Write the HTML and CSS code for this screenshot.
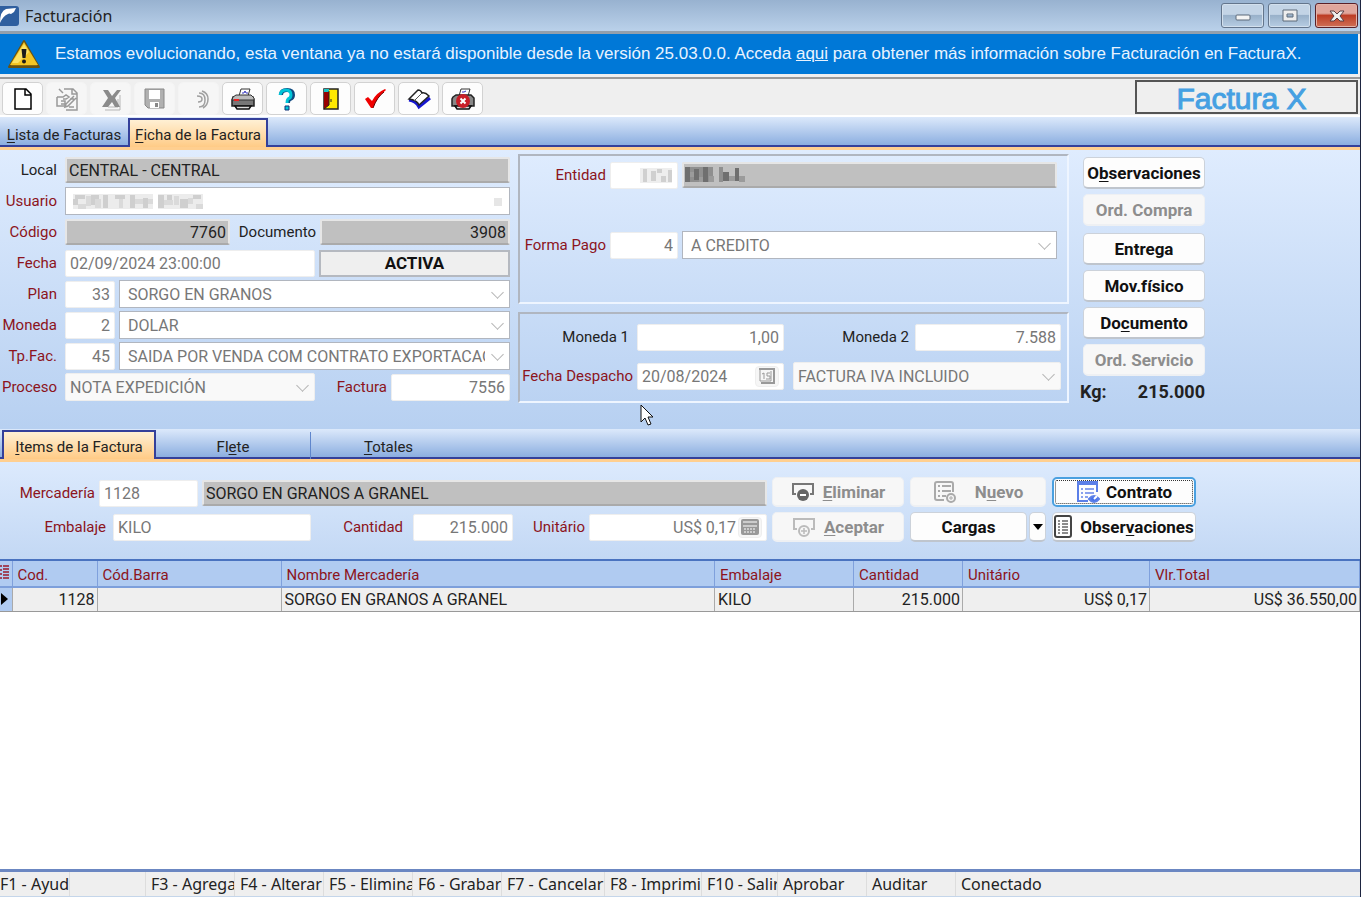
FILE: index.html
```html
<!DOCTYPE html>
<html lang="es">
<head>
    <meta charset="UTF-8">
    <meta name="viewport" content="width=device-width, initial-scale=1.0">
    <title>Facturación</title>
    <link rel="stylesheet" href="styles.css">
</head>
<body>
    <div class="window">
        <header class="titlebar">
            <svg class="app-icon" width="20" height="22" viewBox="0 0 20 22">
                <rect x="-4" y="1" width="23" height="20" rx="3" fill="#2f5f9f"/>
                <path d="M0 18Q0 6 6 4L16 3 14 7 11 9Q9 8 8 9 3 11 0 18Z" fill="#fff"/>
            </svg>
            <h1>Facturación</h1>
            <div class="window-btns">
                <button class="win-btn" aria-label="Minimizar"><svg width="16" height="14" viewBox="0 0 16 14"><rect x="1" y="6" width="14" height="5" rx="1" fill="#f4f4f4" stroke="#5d6a7a"/></svg></button>
                <button class="win-btn" aria-label="Maximizar"><svg width="16" height="14" viewBox="0 0 16 14"><path d="M1 1h14v11H1zM5 5v3h6V5z" fill="#eee" fill-rule="evenodd" stroke="#5d6a7a"/></svg></button>
                <button class="win-btn close" aria-label="Cerrar"><svg width="16" height="14" viewBox="0 0 16 14"><path d="M1 2h4l3 3 3-3h4l-4 5 4 5h-4L8 9l-3 3H1l4-5z" fill="#eee" stroke="#5b3f45"/></svg></button>
            </div>
        </header>

        <div class="banner">
            <svg width="32" height="30" viewBox="0 0 32 30">
                <path d="M16 2 31 28H1Z" fill="#8a6a10" stroke="#6b5310" stroke-width="2" stroke-linejoin="round"/>
                <path d="M16 3 30 26H2Z" fill="#f3c524"/>
                <path d="M16 5 21 13 10 24H4Z" fill="#fbe266"/>
                <path d="M13.5 10h5l-1 9h-3z" fill="#1b1b1b"/>
                <circle cx="16" cy="22.5" r="2" fill="#1b1b1b"/>
            </svg>
            <p>Estamos evolucionando, esta ventana ya no estará disponible desde la versión 25.03.0.0. Acceda <a href="#">aqui</a> para obtener más información sobre Facturación en FacturaX.</p>
        </div>

        <div class="toolbar">
            <button class="tool" aria-label="Nuevo"><svg width="24" height="24" viewBox="0 0 24 24"><path d="M4 2h11l5 5v15H4zM14 2v6h6" fill="#fff" stroke="#000" stroke-width="1.5"/></svg></button>
            <button class="tool" aria-label="Editar" disabled><svg width="24" height="24" viewBox="0 0 24 24" fill="none" stroke="#999" stroke-width="1.5"><path d="M9 2h9l4 4v17H11M17 2v5h5M2 10h6l3-2 3 2-3 2H8M2 10v9h8v-2H6M10 17v-3H6M4 2l4 4M11 17l8-8M11 17l-1 3 3-1 8-8M15 12h4M14 20h5"/></svg></button>
            <button class="tool" aria-label="Borrar" disabled><svg width="24" height="24" viewBox="0 0 24 24"><path d="M21 8v15H6M9 20h10v-8" fill="none" stroke="#b5b5b5"/><path d="M4 3h5l4 6 5-6h4l-6 8 5 9h-5l-3-5-4 5H3l6-9z" fill="#8b8b8b"/></svg></button>
            <button class="tool" aria-label="Grabar" disabled><svg width="24" height="24" viewBox="0 0 24 24"><path d="M2 2h19v19H5l-3-3z" fill="#b0b0b0" stroke="#888"/><path d="M6 3h11v9H6z" fill="#fff"/><path d="M7 15h9v6H7z" fill="#fff"/><path d="M12 16h3v4h-3z" fill="#888"/></svg></button>
            <button class="tool" aria-label="Cancelar" disabled><svg width="24" height="24" viewBox="0 0 24 24" fill="none" stroke="#a0a0a0" stroke-width="1.5"><path d="M12 6q6 0 6 7t-6 7M15 4q6 2 6 8 0 6-5 9M10 9q5 0 5 3t-4 3"/></svg></button>
            <button class="tool" aria-label="Imprimir"><svg width="26" height="24" viewBox="0 0 26 24"><path d="M9 9 11 2h9l-2 7z" fill="#fff" stroke="#333"/><path d="M12 6h2l1-2 1 2h2" stroke="#3535c0" fill="none"/><path d="M3 10h20l1 3v6H2v-6z" fill="#777" stroke="#222" stroke-width="1.5"/><path d="M3 10 6 8h15l3 3v2H2z" fill="#bbb" stroke="#333"/><path d="M4 13h5" stroke="#e22" stroke-width="2"/><path d="M5 19h16l-2 3H7z" fill="#ddd" stroke="#111" stroke-width="1.5"/></svg></button>
            <button class="tool" aria-label="Ayuda"><svg width="24" height="24" viewBox="0 0 24 24" fill="none"><path d="M6 8q0-5 6-5 6 0 6 5 0 3-3 4-2 1-2 4" stroke="#104a80" stroke-width="4"/><path d="M5 8q1-5 6-5 5 0 5 5 0 3-3 4-1 1-1 4" stroke="#00c5d8" stroke-width="3"/><path d="M10 19h4v4h-4z" fill="#00c5d8" stroke="#113377"/></svg></button>
            <button class="tool" aria-label="Salir"><svg width="24" height="24" viewBox="0 0 24 24"><path d="M5 2h14v20H5z" fill="#ffe900" stroke="#222" stroke-width="1.5"/><path d="M5 2h5v16l-5 4z" fill="#900"/><path d="M5 2h5v3H5z" fill="#18c4c4"/><path d="M10 4v14l-5 4M12 12v3" stroke="#222" fill="none"/></svg></button>
            <button class="tool" aria-label="Aprobar"><svg width="26" height="24" viewBox="0 0 26 24"><path d="M3 12 6 10 10 14Q14 6 23 2L24 3Q15 10 11 21H9Z" fill="#f00000"/><path d="M11 21Q15 10 22 5" fill="none" stroke="#600" stroke-width="1"/></svg></button>
            <button class="tool" aria-label="Libro"><svg width="26" height="24" viewBox="0 0 26 24"><path d="M3 13q7 1 10 7L24 11" fill="none" stroke="#1717d0" stroke-width="3"/><path d="M3 12 12 3Q15 3 16 6 19 5 23 9L13 18Q11 13 3 12z" fill="#fff" stroke="#222" stroke-width="1.5"/><path d="M16 6 8 14" fill="none" stroke="#555"/></svg></button>
            <button class="tool" aria-label="Anular impresión"><svg width="26" height="24" viewBox="0 0 26 24"><path d="M9 9 11 2h9l-2 7z" fill="#fff" stroke="#333"/><path d="M12 5h2l2-1" stroke="#3535c0" fill="none"/><path d="M3 10 6 8h15l3 3v8H2v-7z" fill="#888" stroke="#222" stroke-width="1.5"/><path d="M5 19h16l-2 3H7z" fill="#ddd" stroke="#111" stroke-width="1.5"/><circle cx="13" cy="14" r="7" fill="#c81e28"/><path d="m10.5 11.5 5 5m0-5-5 5" stroke="#fff" stroke-width="2"/></svg></button>
            <div class="brand">Factura X</div>
        </div>

        <nav class="tabs">
            <button class="tab tab-list"><u>L</u>ista de Facturas</button>
            <button class="tab active"><u>F</u>icha de la Factura</button>
        </nav>

        <main class="form">
            <div class="fields">
                <div class="row">
                    <label class="dark" for="local">Local</label>
                    <input id="local" class="gray grow" value="CENTRAL - CENTRAL" readonly>
                </div>
                <div class="row">
                    <label for="usuario">Usuario</label>
                    <div class="combo hidden-value grow">
                        <select id="usuario" disabled></select>
                        <svg class="mosaic" width="132" height="16" viewBox="0 0 132 16">
                            <path d="M0 0h80v15H0zM85 0h45v15H85z" fill="#ececec"/>
                            <path d="M2 1h10v4H2zM0 5h5v6H0zM18 1h8v10h-8zM30 1h5v13h-5zM42 1h10v4H42zM57 1h5v13h-5zM70 4h5v10h-5zM85 1h6v13h-6zM94 1h5v5h-5zM107 5h8v9h-8zM120 1h8v4h-8z" fill="#cfcfcf"/>
                            <path d="M5 10h8v5H5zM13 2h5v10h-5zM22 5h6v9h-6zM46 5h4v9h-4zM62 5h8v5h-8zM75 5h5v5h-5zM91 6h9v5h-9zM101 2h5v9h-5zM115 4h5v6h-5zM123 10h7v5h-7z" fill="#dadada"/>
                        </svg>
                    </div>
                </div>
                <div class="row">
                    <label for="codigo">Código</label>
                    <input id="codigo" class="gray num w-codigo" value="7760" readonly>
                    <label class="dark label-doc" for="documento">Documento</label>
                    <input id="documento" class="gray num grow" value="3908" readonly>
                </div>
                <div class="row">
                    <label for="fecha">Fecha</label>
                    <input id="fecha" class="w-fecha" value="02/09/2024 23:00:00" disabled>
                    <output class="state grow">ACTIVA</output>
                </div>
                <div class="row">
                    <label for="plan">Plan</label>
                    <input id="plan" class="num w-code" value="33" disabled>
                    <div class="combo grow"><select aria-label="Plan" disabled><option>SORGO EN GRANOS</option></select></div>
                </div>
                <div class="row">
                    <label for="moneda">Moneda</label>
                    <input id="moneda" class="num w-code" value="2" disabled>
                    <div class="combo grow"><select aria-label="Moneda" disabled><option>DOLAR</option></select></div>
                </div>
                <div class="row">
                    <label for="tpfac">Tp.Fac.</label>
                    <input id="tpfac" class="num w-code" value="45" disabled>
                    <div class="combo grow"><select aria-label="Tipo de factura" disabled><option>SAIDA POR VENDA COM CONTRATO EXPORTACAO</option></select></div>
                </div>
                <div class="row">
                    <label for="proceso">Proceso</label>
                    <div class="combo flat w-fecha"><select id="proceso" disabled><option>NOTA EXPEDICIÓN</option></select></div>
                    <label class="label-fac" for="factura">Factura</label>
                    <input id="factura" class="num grow" value="7556" disabled>
                </div>
            </div>

            <div class="groups">
                <section class="group group-entity">
                    <div class="row">
                        <label for="entidad">Entidad</label>
                        <div class="hidden-value w-entity">
                            <input id="entidad" disabled>
                            <svg class="mosaic" width="34" height="16" viewBox="0 0 34 16">
                                <path d="M0 0h32v15H0z" fill="#eee"/>
                                <path d="M3 1h4v13H3zM11 3h5v10h-5zM17 1h5v4h-5zM21 8h5v6h-5zM28 2h4v12h-4z" fill="#d0d0d0"/>
                            </svg>
                        </div>
                        <div class="hidden-value grow">
                            <input class="gray" aria-label="Nombre de la entidad" readonly>
                            <svg class="mosaic" width="62" height="16" viewBox="0 0 62 16">
                                <path d="M0 0h28v15H0zM34 0h4v15h-4z" fill="#8f8f8f"/>
                                <path d="M0 0h5v15H0zM9 2h5v11H9zM18 0h5v15h-5zM38 5h6v9h-6zM50 1h4v13h-4z" fill="#6f6f6f"/>
                                <path d="M5 5h4v5H5zM14 10h4v5h-4zM24 9h5v6h-5zM44 9h6v5h-6zM54 9h6v6h-6z" fill="#9b9b9b"/>
                            </svg>
                        </div>
                    </div>
                    <div class="row">
                        <label for="pago">Forma Pago</label>
                        <input id="pago" class="num w-entity" value="4" disabled>
                        <div class="combo grow"><select aria-label="Forma de pago" disabled><option>A CREDITO</option></select></div>
                    </div>
                </section>
                <section class="group group-rates">
                    <div class="row">
                        <label class="dark label-rate" for="moneda1">Moneda 1</label>
                        <input id="moneda1" class="num w-rate" value="1,00" disabled>
                        <label class="dark label-m2" for="moneda2">Moneda 2</label>
                        <input id="moneda2" class="num grow" value="7.588" disabled>
                    </div>
                    <div class="row">
                        <label for="despacho">Fecha Despacho</label>
                        <div class="with-btn w-rate">
                            <input id="despacho" value="20/08/2024" disabled>
                            <button class="mini" aria-label="Calendario" disabled><svg width="18" height="18" viewBox="0 0 18 18" fill="none" stroke="#999"><path d="M1 2h16M16 2v14M3 16h14" stroke-width="2"/><path d="M2 2v12h11V4"/><path d="M4 7l2-1v6M12 6H9v3h3v3H8"/></svg></button>
                        </div>
                        <div class="combo flat grow tax"><select aria-label="IVA" disabled><option>FACTURA IVA INCLUIDO</option></select></div>
                    </div>
                </section>
            </div>

            <aside class="actions">
                <button class="btn">O<u>b</u>servaciones</button>
                <button class="btn" disabled>Ord. Compra</button>
                <button class="btn second">Entrega</button>
                <button class="btn">Mov.físico</button>
                <button class="btn">Do<u>c</u>umento</button>
                <button class="btn" disabled>Ord. Servicio</button>
                <div class="weight"><span>Kg:</span><span>215.000</span></div>
            </aside>

            <svg class="pointer" width="14" height="22" viewBox="0 0 14 22"><path d="M1 1v17l4-4 3 7 3-1-3-7h5z" fill="#fff" stroke="#111"/></svg>
        </main>

        <nav class="tabs sub">
            <button class="tab active"><u>I</u>tems de la Factura</button>
            <button class="tab">Fl<u>e</u>te</button>
            <button class="tab"><u>T</u>otales</button>
        </nav>

        <section class="item-form">
            <div class="item-fields">
                <div class="row">
                    <label class="label-merc" for="merc">Mercadería</label>
                    <input id="merc" class="w-merc" value="1128" disabled>
                    <input class="gray grow" aria-label="Nombre mercadería" value="SORGO EN GRANOS A GRANEL" readonly>
                </div>
                <div class="row">
                    <label class="label-emb" for="embalaje">Embalaje</label>
                    <input id="embalaje" class="w-emb" value="KILO" disabled>
                    <label class="label-cant" for="cantidad">Cantidad</label>
                    <input id="cantidad" class="num w-cant" value="215.000" disabled>
                    <label class="label-unit" for="unitario">Unitário</label>
                    <div class="with-btn grow">
                        <input id="unitario" class="num" value="US$ 0,17" disabled>
                        <button class="mini" aria-label="Calculadora" disabled><svg width="20" height="18" viewBox="0 0 20 18"><rect x="1" y="1" width="18" height="16" rx="2" fill="#999"/><path d="M3 4h14M3 8h14" stroke="#fff"/><path d="M4 11h12M4 14h12" stroke="#fff" stroke-dasharray="2 1"/></svg></button>
                    </div>
                </div>
            </div>
            <div class="item-actions">
                <button class="btn" disabled><svg width="24" height="22" viewBox="0 0 24 22" fill="none"><path d="M5 13H2V3h20v10h-3" stroke="#777" stroke-width="2"/><circle cx="12" cy="14" r="6" fill="#666"/><path d="M9 14h6" stroke="#fff" stroke-width="2"/></svg><span><u>E</u>liminar</span></button>
                <button class="btn" disabled><svg width="24" height="24" viewBox="0 0 24 24" fill="none" stroke="#aaa" stroke-width="2"><path d="M11 20H4q-2 0-2-2V4q0-2 2-2h14q2 0 2 2v8M5 6h2M5 11h2M5 16h2M9 6h9M9 11h9M9 16h4"/><circle cx="18" cy="18" r="4"/><path d="M16 18h4M18 16v4" stroke-width="1"/></svg><span>N<u>u</u>evo</span></button>
                <button class="btn focused"><svg width="24" height="24" viewBox="0 0 24 24" fill="none" stroke="#5b7fe8" stroke-width="2"><path d="M12 21H2V3h19v9"/><path d="M1 3h21" stroke-width="4"/><path d="M5 9h2M5 13h2M5 17h2M9 9h9M9 13h9M9 17h3" stroke="#8aa2ee"/><path d="M13 19q5-6 10 0-5 6-10 0z" fill="#4671ea"/><path d="M18 19l3-3" stroke="#fff"/></svg><span>Contrato</span></button>
                <button class="btn" disabled><svg width="24" height="22" viewBox="0 0 24 22" fill="none" stroke="#bbb" stroke-width="2"><path d="M5 13H2V3h20v10h-3"/><circle cx="12" cy="15" r="5"/><path d="M9 15h6M12 12v6" stroke-width="1.5"/></svg><span><u>A</u>ceptar</span></button>
                <div class="split">
                    <button class="btn">Cargas</button>
                    <button class="btn arrow" aria-label="Más cargas"><svg width="12" height="8" viewBox="0 0 12 8"><path d="M1 1h10L6 7z" fill="#000"/></svg></button>
                </div>
                <button class="btn notes"><svg width="18" height="24" viewBox="0 0 18 24" fill="none" stroke="#444" stroke-width="2"><rect x="1" y="1" width="16" height="21" rx="2"/><path d="M4 6h2M4 9h2M4 12h2M4 15h2M4 18h2M8 6h6M8 9h6M8 12h6M8 15h6M8 18h6" stroke="#666" stroke-width="1.5"/></svg><span>Obser<u>v</u>aciones</span></button>
            </div>
        </section>

        <div class="grid-area">
            <table class="items">
                <colgroup>
                    <col class="c-mark"><col class="c-cod"><col class="c-barra"><col class="c-nombre">
                    <col class="c-emb"><col class="c-cant"><col class="c-unit"><col class="c-total">
                </colgroup>
                <thead>
                    <tr>
                        <th><svg width="9" height="14" viewBox="0 0 9 14"><path d="M0 1h2M0 5h2M0 9h2M0 13h2M3 1h6M3 4h6M3 7h6M3 10h6M3 13h6" stroke="#9a1a2a" stroke-width="1.5"/></svg></th>
                        <th>Cod.</th>
                        <th>Cód.Barra</th>
                        <th>Nombre Mercadería</th>
                        <th>Embalaje</th>
                        <th>Cantidad</th>
                        <th>Unitário</th>
                        <th>Vlr.Total</th>
                    </tr>
                </thead>
                <tbody>
                    <tr>
                        <td class="mark"><svg width="8" height="12" viewBox="0 0 8 12"><path d="M1 0 8 6 1 12z" fill="#000"/></svg></td>
                        <td class="num">1128</td>
                        <td></td>
                        <td>SORGO EN GRANOS A GRANEL</td>
                        <td>KILO</td>
                        <td class="num">215.000</td>
                        <td class="num">US$ 0,17</td>
                        <td class="num">US$ 36.550,00</td>
                    </tr>
                </tbody>
            </table>
        </div>

        <footer class="status">
            <span class="s-first">F1 - Ayuda</span>
            <span class="s-empty"></span>
            <span>F3 - Agregar</span>
            <span>F4 - Alterar</span>
            <span>F5 - Eliminar</span>
            <span>F6 - Grabar</span>
            <span class="s-wide">F7 - Cancelar</span>
            <span class="s-print">F8 - Imprimir</span>
            <span class="s-exit">F10 - Salir</span>
            <span>Aprobar</span>
            <span>Auditar</span>
            <span class="s-rest">Conectado</span>
        </footer>
    </div>
</body>
</html>
```

FILE: styles.css
```css
* {
    box-sizing: border-box;
}
body {
    margin: 0;
    font-family: Roboto, "Liberation Sans", sans-serif;
    font-size: 16px;
    color: #222;
}
button, input, select {
    font: inherit;
    margin: 0;
}
u {
    text-underline-offset: 2px;
}
.window {
    display: flex;
    flex-direction: column;
    min-height: 100vh;
    overflow: hidden;
    border-right: 1px solid #1d2440;
    background: #efefef;
}

/* title bar */
.titlebar {
    display: flex;
    align-items: center;
    height: 34px;
    background: linear-gradient(#98b2d0, #bad1ea);
    border-bottom: 3px solid #93a0ad;
}
.titlebar h1 {
    flex: 1;
    margin: 0 0 0 5px;
    font: 16px "Noto Sans", sans-serif;
    color: #222;
}
.window-btns {
    display: flex;
    gap: 4px;
    padding-right: 2px;
}
.win-btn {
    display: flex;
    align-items: center;
    justify-content: center;
    width: 43px;
    height: 25px;
    padding: 0;
    border: 1px solid #63758c;
    border-radius: 3px;
    background: linear-gradient(#c3d4e6 45%, #99b1ca 50%, #b7cde3);
    box-shadow: inset 0 0 0 1px #d3e0ed;
}
.win-btn.close {
    border-color: #5a2028;
    background: linear-gradient(#e0a69c 40%, #bd3d25 50%, #cf7057);
    box-shadow: inset 0 0 0 1px #e4b3a8;
}

/* notice */
.banner {
    display: flex;
    align-items: center;
    gap: 15px;
    height: 40px;
    margin: 0 2px 3px 0;
    padding-left: 8px;
    background: #0078d7;
    color: #e8f3ff;
    font: 17px "Liberation Sans", sans-serif;
    white-space: nowrap;
}
.banner p {
    margin: 0;
}
.banner a {
    color: inherit;
}

/* toolbar */
.toolbar {
    display: flex;
    gap: 3px;
    height: 40px;
    padding: 3px 2px 2px;
    background: #efefef;
    border-top: 2px solid #9a9a9a;
    border-bottom: 2px solid #fff;
}
.tool {
    display: flex;
    align-items: center;
    justify-content: center;
    width: 41px;
    height: 33px;
    padding: 0;
    border: 1px solid #d2d2d2;
    border-radius: 5px;
    background: #fdfdfd;
}
.tool:disabled {
    background: #f6f6f6;
    border-color: #f4f4f4;
}
.brand {
    width: 223px;
    height: 34px;
    margin: -2px 0 0 auto;
    padding-right: 10px;
    border: 2px solid #555;
    color: #45a0e2;
    font: 30px/34px "Liberation Sans", sans-serif;
    -webkit-text-stroke: 1px #45a0e2;
    text-align: center;
}

/* tabs */
.tabs {
    display: flex;
    align-items: flex-end;
    height: 33px;
    padding-top: 3px;
    background: linear-gradient(#dce9fb, #86aade);
    border-bottom: 3px solid #ffcf90;
    box-shadow: inset 0 -2px #34409a;
}
.tab {
    height: 27px;
    padding: 2px 0 0;
    border: 0;
    background: none;
    color: #222;
    font-size: 15px;
}
.tab-list {
    width: 128px;
}
.tab.active {
    width: 140px;
    height: 29px;
    border: 2px solid #34409a;
    border-bottom: 0;
    background: linear-gradient(#fff0d4, #ffcb86);
}
.tabs.sub .tab {
    width: 155px;
    border-right: 1px solid #5f86cc;
}
.tabs.sub .tab:last-child {
    border-right: 0;
}
.tabs.sub .tab.active {
    width: 154px;
    margin-left: 2px;
    border-right: 2px solid #34409a;
}

/* invoice form */
.form {
    position: relative;
    display: flex;
    height: 279px;
    background: linear-gradient(#dfecfe, #b7d0f1);
}
.fields {
    display: flex;
    flex-direction: column;
    gap: 3px;
    width: 510px;
    padding-top: 6px;
}
.row {
    display: flex;
    align-items: center;
    gap: 4px;
    height: 28px;
}
.grow {
    flex: 1;
    min-width: 0;
}
label {
    color: #8c1420;
    font-size: 15px;
    text-align: right;
    white-space: nowrap;
}
label.dark {
    color: #222;
}
.fields label:first-child {
    width: 57px;
    margin-right: 4px;
    margin-left: 0;
}
input {
    width: 100%;
    height: 27px;
    padding: 0 4px;
    border: 1px solid #eee;
    border-radius: 2px;
    background: #fff;
    color: #777;
}
input.gray {
    height: 26px;
    padding: 0 2px;
    border: 2px solid #e6e6e6;
    border-bottom-color: #aaa;
    background: #c0c0c0;
    color: #222;
}
.num {
    text-align: right;
}
.combo {
    position: relative;
    height: 28px;
    border: 1px solid #b1b6bf;
    background: #fff;
}
.combo select {
    display: block;
    width: 100%;
    height: 26px;
    padding: 0 24px 0 8px;
    border: 0;
    background: none;
    color: #777;
    opacity: 1;
    appearance: none;
}
.combo::after {
    content: "";
    position: absolute;
    top: 7px;
    right: 7px;
    width: 8px;
    height: 8px;
    border: solid #b5b5b5;
    border-width: 0 1px 1px 0;
    transform: rotate(45deg);
}
.combo.hidden-value::after {
    top: 10px;
    border: 0;
    background: #e6e6e6;
    transform: none;
}
.combo.flat {
    border: 1px solid #eee;
    border-radius: 2px;
    background: #f9f9f9;
}
.combo.flat select {
    padding-left: 4px;
}
.hidden-value {
    position: relative;
}
.mosaic {
    position: absolute;
    top: 6px;
    left: 7px;
}
.w-entity .mosaic {
    left: 30px;
}
.grow > .gray + .mosaic {
    left: 3px;
    top: 5px;
}
.w-codigo {
    width: 165px;
}
.label-doc {
    width: 82px;
}
.w-fecha {
    width: 250px;
}
.w-code {
    width: 50px;
}
.label-fac {
    width: 68px;
}
.state {
    height: 27px;
    border: 2px solid #b5b9c0;
    background: #efefef;
    color: #111;
    font-size: 17px;
    font-weight: bold;
    line-height: 23px;
    text-align: center;
}

.groups {
    width: 551px;
    margin-left: 8px;
    padding-top: 4px;
}
.group {
    border: 2px solid;
    border-color: #b0b6c0 #eef5ff #eef5ff #b0b6c0;
}
.group-entity {
    display: flex;
    flex-direction: column;
    gap: 42px;
    height: 150px;
    padding: 5px 10px 0 0;
}
.group-entity label {
    width: 86px;
}
.w-entity {
    width: 68px;
    flex: none;
}
.group-rates {
    display: flex;
    flex-direction: column;
    gap: 11px;
    height: 91px;
    margin-top: 8px;
    padding: 9px 6px 0 0;
}
.group-rates label:first-child {
    width: 113px;
}
.group-rates .label-rate {
    padding-right: 4px;
}
.w-rate {
    width: 147px;
    flex: none;
}
.label-m2 {
    width: 123px;
    padding-right: 2px;
}
.tax {
    margin-left: 5px;
}
.with-btn {
    display: flex;
    align-items: center;
    border: 1px solid #eee;
    border-radius: 2px;
    background: #fff;
}
.with-btn input {
    flex: 1;
    min-width: 0;
    height: 25px;
    padding-right: 2px;
    border: 0;
    background: none;
}
.mini {
    display: flex;
    align-items: center;
    justify-content: center;
    width: 24px;
    height: 21px;
    margin-right: 4px;
    padding: 0;
    border: 1px solid #eee;
    border-radius: 4px;
    background: #f6f6f6;
}

.btn {
    padding: 0;
    border: 1px solid #ccd2da;
    border-bottom: 2px solid #bfc5cd;
    border-radius: 5px;
    background: #fdfdfd;
    color: #111;
    font-size: 17px;
    font-weight: bold;
    white-space: nowrap;
}
.btn:disabled {
    border-color: #eef0f3;
    background: #f7f7f7;
    color: #8d8d8d;
}
.actions {
    display: flex;
    flex-direction: column;
    gap: 5px;
    width: 122px;
    margin-left: 14px;
    padding-top: 7px;
}
.actions .btn {
    height: 32px;
}
.actions .second {
    margin-top: 2px;
}
.weight {
    display: flex;
    justify-content: space-between;
    margin-left: -3px;
    font-size: 18px;
    font-weight: bold;
}
.pointer {
    position: absolute;
    top: 254px;
    left: 640px;
}

/* item form */
.item-form {
    display: flex;
    gap: 5px;
    height: 97px;
    padding-top: 15px;
    background: linear-gradient(#dceafd, #c3d8f4);
}
.item-fields {
    display: flex;
    flex-direction: column;
    gap: 6px;
    width: 767px;
    padding-top: 2px;
}
.label-merc {
    width: 95px;
}
.w-merc {
    width: 99px;
}
.label-emb {
    width: 109px;
    padding-right: 3px;
}
.w-emb {
    width: 198px;
}
.label-cant {
    width: 88px;
    margin-right: 6px;
}
.w-cant {
    width: 100px;
}
.label-unit {
    width: 68px;
}
.item-actions {
    display: grid;
    grid-template-columns: 132px 136px 144px;
    grid-template-rows: 30px 30px;
    gap: 5px 6px;
}
.item-actions .btn {
    display: flex;
    align-items: center;
    justify-content: center;
    gap: 8px;
}
.item-actions .btn:nth-child(2) {
    gap: 18px;
}
.item-actions .focused {
    gap: 6px;
    border: 2px solid #4aa0e0;
    outline: 1px dotted #333;
    outline-offset: -4px;
}
.split {
    display: flex;
    gap: 2px;
}
.split .btn {
    flex: 1;
}
.split .arrow {
    flex: 0 0 17px;
}

/* item grid */
.grid-area {
    flex: 1;
    background: #fff;
    border-top: 2px solid #4a73c0;
    border-bottom: 3px solid #6b87c2;
}
.items {
    width: 100%;
    table-layout: fixed;
    border-collapse: collapse;
}
.items th {
    height: 26px;
    padding: 2px 5px 0;
    border-right: 1px solid #7fa0dc;
    border-bottom: 2px solid #7d9fdb;
    background: #b0cbf1;
    color: #8c1420;
    font-size: 15px;
    font-weight: normal;
    text-align: left;
}
.items td {
    height: 24px;
    padding: 0 3px;
    border-right: 1px solid #aaa;
    border-bottom: 1px solid #999;
    background: #efefef;
    white-space: nowrap;
}
.items th:first-child, .items .mark {
    padding: 0;
}
.items .mark {
    background: #b0cbf1;
}
.items .num {
    text-align: right;
    padding-right: 2px;
}
.c-mark {
    width: 12px;
}
.c-cod {
    width: 85px;
}
.c-barra {
    width: 184px;
}
.c-emb {
    width: 139px;
}
.c-cant {
    width: 109px;
}
.c-unit {
    width: 187px;
}
.c-total {
    width: 210px;
}

/* status bar */
.status {
    display: flex;
    height: 25px;
    background: #efefef;
    font: 16px/25px "Noto Sans", sans-serif;
    border-bottom: 1px solid #c5d6ea;
}
.status span {
    flex: none;
    width: 89px;
    padding-left: 5px;
    border-right: 1px solid #ddd;
    overflow: hidden;
    white-space: nowrap;
}
.status .s-first {
    width: 70px;
    padding-left: 0;
}
.status .s-empty {
    width: 76px;
}
.status .s-wide {
    width: 103px;
}
.status .s-print {
    width: 97px;
}
.status .s-exit {
    width: 76px;
}
.status .s-rest {
    flex: 1;
    border-right: 0;
}
```
